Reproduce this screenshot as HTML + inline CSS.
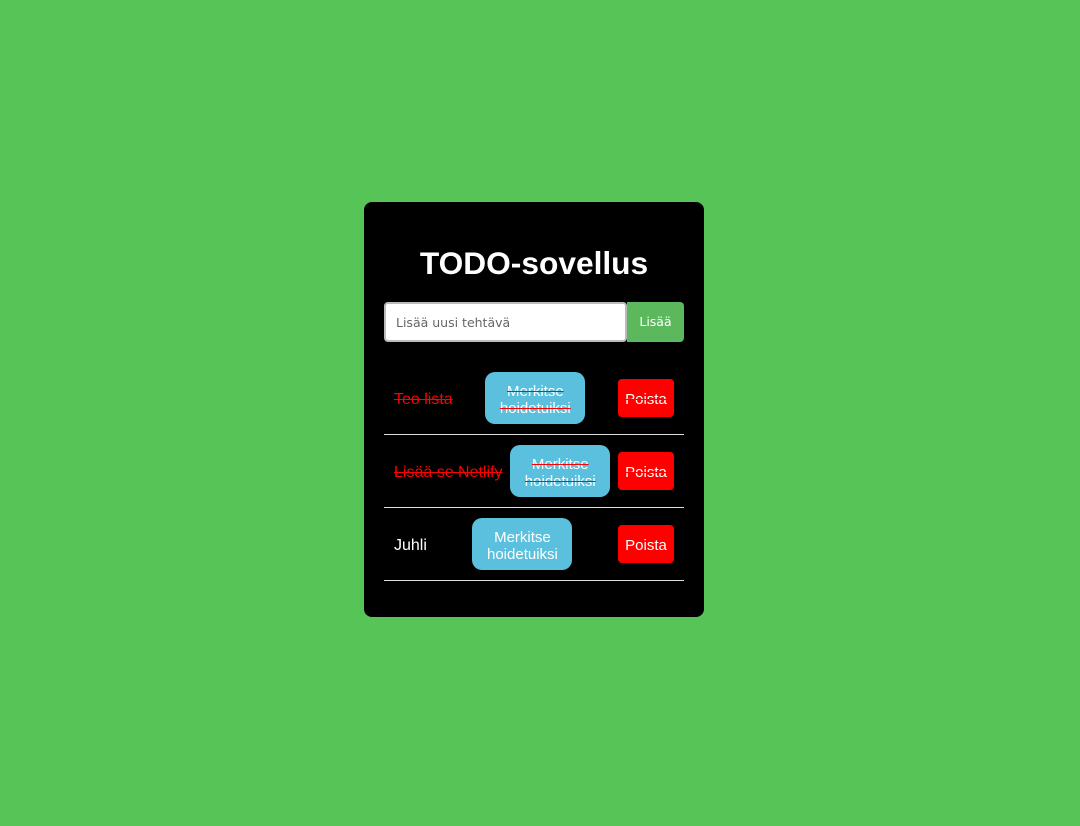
<!DOCTYPE html>
<html><head><meta charset="utf-8"><style>
html,body{margin:0;padding:0}
body{width:1080px;height:826px;background:#56c456;font-family:"Liberation Sans",sans-serif;position:relative}
.card{position:absolute;left:364px;top:202px;width:300px;height:375px;padding:20px;background:#000;border-radius:8px}
.title{position:absolute;left:0;width:340px;top:41px;text-align:center;color:#fff;font-weight:bold;font-size:31.7px;line-height:40px}
.inp{position:absolute;left:20px;top:100px;height:36px;border:2px solid #bbb;border-radius:4px;background:#fff;width:239px}
.inp span{position:absolute;left:10px;top:11px;font-family:"DejaVu Sans",sans-serif;font-size:12.5px;color:#666}
.add{position:absolute;left:263px;top:100px;width:57px;height:40px;background:#5cb85c;border-radius:0 4px 4px 0;color:#fff;font-family:"DejaVu Sans",sans-serif;font-size:12.5px;line-height:40px;text-align:center}
.row{position:absolute;left:20px;width:280px;height:62px;padding:5px 10px;border-bottom:1px solid #ddd;display:flex;align-items:center;justify-content:space-between}
.t{color:#fff;font-size:16px;padding-top:4px}
.done .t,.done .m,.done .p{text-decoration:line-through;text-decoration-color:red}
.done .t{color:red}
.m{width:100px;height:52px;box-sizing:border-box;padding-top:3px;background:#5bc0de;border-radius:10px;color:#fff;font-size:15px;line-height:17px;text-align:center;display:flex;align-items:center;justify-content:center}
.p{width:56px;height:38px;box-sizing:border-box;padding-top:2px;background:red;border-radius:4px;color:#fff;font-size:15px;line-height:38px;text-align:center}
</style></head><body>
<div class="card">
<div class="title">TODO-sovellus</div>
<div class="inp"><span>Lisää uusi tehtävä</span></div>
<div class="add">Lisää</div>
<div class="row done" style="top:160px"><span class="t">Teo lista</span><div class="m">Merkitse<br>hoidetuiksi</div><div class="p">Poista</div></div>
<div class="row done" style="top:233px"><span class="t">Lisää se Netlify</span><div class="m">Merkitse<br>hoidetuiksi</div><div class="p">Poista</div></div>
<div class="row" style="top:306px"><span class="t">Juhli</span><div class="m">Merkitse<br>hoidetuiksi</div><div class="p">Poista</div></div>
</div>
</body></html>
